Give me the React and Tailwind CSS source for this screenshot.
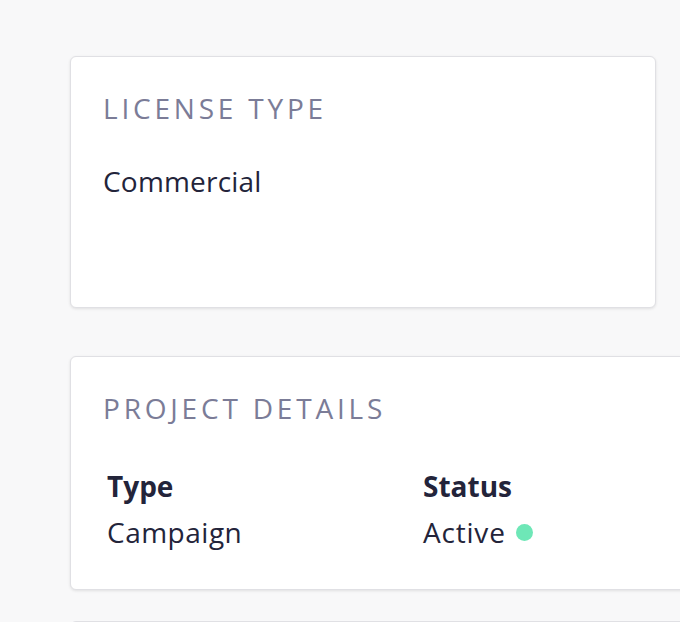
export default function App() {
  return (
    <div
      className="h-[622px] w-[680px] overflow-hidden bg-[#f8f8f9] pl-[70px] pt-[56px]"
      style={{ fontFamily: "'Open Sans', 'Noto Sans', sans-serif" }}
    >
      <div className="flex flex-col">
        {/* License card */}
        <section className="h-[252px] w-[586px] shrink-0 rounded-[6px] border border-[#e0e0e4] bg-white px-[32px] pt-[35px] shadow-[0_1px_3px_rgba(0,0,0,0.1)]">
          <h2 className="text-[28px] leading-[32px] tracking-[3.8px] text-[#7b7c97] uppercase">
            License Type
          </h2>
          <p className="mt-[41px] text-[28px] leading-[32px] tracking-[0.2px] text-[#23243a]">
            Commercial
          </p>
        </section>

        {/* Project card */}
        <section className="mt-[48px] h-[234px] w-[700px] shrink-0 rounded-[6px] border border-[#e0e0e4] bg-white px-[32px] pt-[35px] shadow-[0_1px_3px_rgba(0,0,0,0.1)]">
          <h2 className="text-[28px] leading-[32px] tracking-[3.8px] text-[#7b7c97] uppercase">
            Project Details
          </h2>
          <div className="mt-[46px] grid grid-cols-[316px_1fr] pl-[4px] text-[#23243a]">
            <div>
              <div className="text-[28px] leading-[32px] font-bold">Type</div>
              <div className="mt-[14px] text-[28px] leading-[32px] tracking-[0.5px]">Campaign</div>
            </div>
            <div>
              <div className="text-[28px] leading-[32px] font-bold">Status</div>
              <div className="mt-[14px] flex items-center gap-[10px] text-[28px] leading-[32px] tracking-[0.8px]">
                Active
                <span className="h-[17px] w-[17px] rounded-full bg-[#6ee7b7]" />
              </div>
            </div>
          </div>
        </section>

        {/* Next card peeking in */}
        <section className="mt-[31px] h-[40px] w-[700px] shrink-0 rounded-[6px] border border-[#e0e0e4] bg-white" />
      </div>
    </div>
  );
}
